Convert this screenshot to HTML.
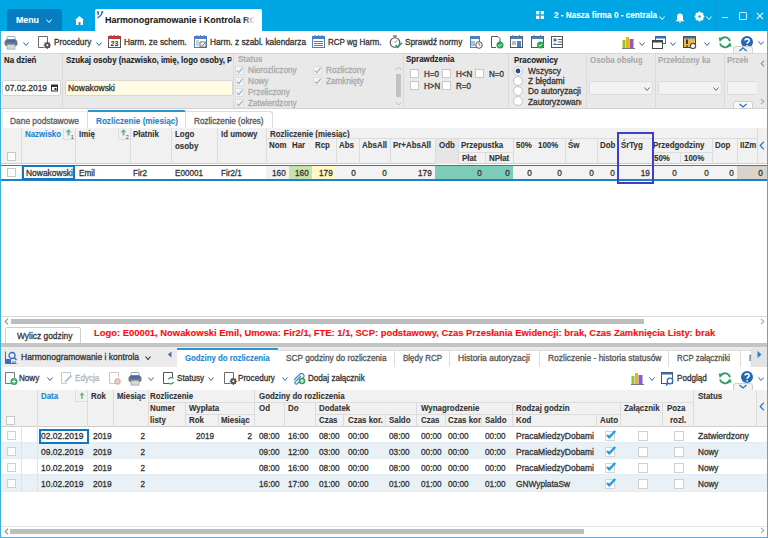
<!DOCTYPE html>
<html><head><meta charset="utf-8"><style>
html,body{margin:0;padding:0;width:768px;height:538px;overflow:hidden;background:#fff;}
body{position:relative;font-family:"Liberation Sans", sans-serif;}
body>div,body>span,body>svg{position:absolute;}
.t{white-space:nowrap;-webkit-text-stroke:0.1px currentColor;}
.t.n{-webkit-text-stroke:0.3px currentColor;}
</style></head><body>
<div style="left:0px;top:0px;width:768px;height:31px;background:#00a5e3;"></div>
<div style="left:7px;top:9px;width:55px;height:22px;background:#087cc0;border-radius:2px 2px 0 0;"></div>
<span class="t" style="top:14.03px;font-size:9px;line-height:12px;color:#fff;font-weight:bold;left:16px;transform:scaleX(0.979);transform-origin:0 0;">Menu</span>
<svg style="left:46px;top:19px;" width="6" height="4" viewBox="0 0 6 4"><path d="M0.5 0.5 L3.0 3.5 L5.5 0.5" fill="none" stroke="#fff" stroke-width="1"/></svg>
<svg style="left:75px;top:16px;" width="9" height="9" viewBox="0 0 9 9"><path d="M4.5 0 L9 4 L8 4 L8 9 L5.5 9 L5.5 6 L3.5 6 L3.5 9 L1 9 L1 4 L0 4 Z" fill="#fff"/></svg>
<div style="left:95px;top:9px;width:167px;height:22px;background:#fff;border-radius:2px 2px 0 0;"></div>
<svg style="left:96px;top:10px;" width="9" height="9" viewBox="0 0 9 9"><path d="M2 2.2 L2.2 4.5 M6.3 2 Q5.8 5.2 2 7.6" fill="none" stroke="#2a6cbf" stroke-width="1.4" stroke-linecap="round"/><circle cx="2" cy="2.3" r="1" fill="#2a6cbf"/><circle cx="6.3" cy="2.1" r="1" fill="#2a6cbf"/></svg>
<span class="t" style="top:13.63px;font-size:9.6px;line-height:12px;color:#1b1b1b;font-weight:bold;left:105px;width:163.1px;overflow:hidden;transform:scaleX(0.932);transform-origin:0 0;">Harmonogramowanie i Kontrola RCP</span>
<div style="left:243px;top:10px;width:19px;height:18px;background:linear-gradient(90deg, rgba(255,255,255,0), rgba(255,255,255,0.85) 50%, #fff 75%);"></div>
<svg style="left:536px;top:11px;" width="8" height="8" viewBox="0 0 8 8"><rect x="0" y="0" width="3.3" height="3.3" fill="#fff"/><rect x="4.7" y="0" width="3.3" height="3.3" fill="#fff"/><rect x="0" y="4.7" width="3.3" height="3.3" fill="#fff"/><rect x="4.7" y="4.7" width="3.3" height="3.3" fill="#fff"/></svg>
<span class="t" style="top:9.39px;font-size:8.8px;line-height:12px;color:#fff;font-weight:bold;left:554px;transform:scaleX(0.928);transform-origin:0 0;">2 - Nasza firma 0 - centrala</span>
<svg style="left:659px;top:15.5px;" width="6" height="4" viewBox="0 0 6 4"><path d="M0.5 0.5 L3.0 3.5 L5.5 0.5" fill="none" stroke="#fff" stroke-width="1"/></svg>
<svg style="left:675px;top:13px;" width="10" height="10" viewBox="0 0 10 10"><path d="M5 0.5 C2.5 0.5 2 2.5 2 4.5 L2 6.8 L0.5 8.3 L9.5 8.3 L8 6.8 L8 4.5 C8 2.5 7.5 0.5 5 0.5 Z M3.8 8.8 L6.2 8.8 L5 10 Z" fill="#fff"/></svg>
<svg style="left:694px;top:11px;" width="11" height="11" viewBox="0 0 11 11"><circle cx="5.5" cy="5.5" r="3.2" fill="none" stroke="#fff" stroke-width="2.2"/><path d="M5.5 0.6 L5.5 10.4 M0.6 5.5 L10.4 5.5 M2 2 L9 9 M9 2 L2 9" stroke="#fff" stroke-width="1.7"/><circle cx="5.5" cy="5.5" r="1.2" fill="#00a5e3"/></svg>
<svg style="left:706px;top:15.5px;" width="6" height="4" viewBox="0 0 6 4"><path d="M0.5 0.5 L3.0 3.5 L5.5 0.5" fill="none" stroke="#fff" stroke-width="1"/></svg>
<div style="left:716px;top:0px;width:1px;height:31px;background:#0a9ad2;"></div>
<div style="left:722px;top:17px;width:6px;height:1px;background:#bfe6f7;"></div>
<div style="left:739px;top:12px;width:6px;height:6px;background:transparent;border:1px solid #d0eefa;border-radius:1px;"></div>
<svg style="left:756px;top:12px;" width="8" height="8" viewBox="0 0 8 8"><path d="M0.8 0.8 L7 7 M7 0.8 L0.8 7" stroke="#dff4fc" stroke-width="1.1"/></svg>
<div style="left:0px;top:31px;width:1px;height:507px;background:#40b0de;"></div>
<div style="left:767px;top:31px;width:1px;height:507px;background:#40b0de;"></div>
<div style="left:0px;top:537px;width:768px;height:1px;background:#40b0de;"></div>
<svg style="left:4px;top:36px;" width="14" height="14" viewBox="0 0 14 14"><rect x="3" y="0.5" width="8" height="5" rx="1" fill="#fff" stroke="#8a9099" stroke-width="0.8"/><rect x="0.5" y="4" width="13" height="6" rx="2" fill="#6f757c"/><rect x="2.5" y="3.2" width="9" height="2.6" fill="#2f6cc0"/><rect x="3" y="8.3" width="8" height="4.8" fill="#cfd8e3" stroke="#8a9099" stroke-width="0.6"/></svg>
<svg style="left:23px;top:42px;" width="6" height="4" viewBox="0 0 6 4"><path d="M0.5 0.5 L3.0 3.5 L5.5 0.5" fill="none" stroke="#2a64a8" stroke-width="1"/></svg>
<svg style="left:38px;top:36px;" width="14" height="14" viewBox="0 0 14 14"><path d="M6 11.5 H0.5 V0.5 H9.5 V6" fill="none" stroke="#6b6b6b" stroke-width="1"/><circle cx="9.3" cy="9.3" r="2.1" fill="none" stroke="#555" stroke-width="1.7"/><path d="M9.3 5.6 V13 M5.6 9.3 H13 M6.7 6.7 L11.9 11.9 M11.9 6.7 L6.7 11.9" stroke="#555" stroke-width="1.1"/><circle cx="9.3" cy="9.3" r="1" fill="#fff"/></svg>
<span class="t n" style="top:36.06px;font-size:8.9px;line-height:12px;color:#333;left:53.5px;transform:scaleX(0.920);transform-origin:0 0;">Procedury</span>
<svg style="left:96px;top:42px;" width="6" height="4" viewBox="0 0 6 4"><path d="M0.5 0.5 L3.0 3.5 L5.5 0.5" fill="none" stroke="#2a64a8" stroke-width="1"/></svg>
<svg style="left:108px;top:35px;" width="13" height="13" viewBox="0 0 13 13"><rect x="0.5" y="1.5" width="12" height="11" fill="#fff" stroke="#555" stroke-width="1"/><rect x="0.5" y="1.5" width="12" height="2.5" fill="#d9322c"/><path d="M3 0 L3 2.5 M6.5 0 L6.5 2.5 M10 0 L10 2.5" stroke="#d9322c" stroke-width="1"/><text x="6.5" y="11.3" font-size="7" font-family="Liberation Sans" font-weight="bold" text-anchor="middle" fill="#333">23</text></svg>
<span class="t n" style="top:36.06px;font-size:8.9px;line-height:12px;color:#333;left:123.5px;transform:scaleX(0.933);transform-origin:0 0;">Harm. ze schem.</span>
<svg style="left:194px;top:35px;" width="13" height="13" viewBox="0 0 13 13"><rect x="0.5" y="1.5" width="12" height="11" fill="#fff" stroke="#4a7fc1" stroke-width="1"/><rect x="0.5" y="1.5" width="12" height="2.5" fill="#4a7fc1"/><path d="M3 0 L3 2.5 M6.5 0 L6.5 2.5 M10 0 L10 2.5" stroke="#4a7fc1"/><rect x="6" y="7" width="6" height="5" fill="#fff" stroke="#555" stroke-width="0.8"/><path d="M7 9.5 L8.5 11 L11 8" fill="none" stroke="#3a9a55" stroke-width="1"/><path d="M2 6 H5 M2 8 H5 M2 10 H5" stroke="#888" stroke-width="0.8"/></svg>
<span class="t n" style="top:36.06px;font-size:8.9px;line-height:12px;color:#333;left:209.5px;width:104.7px;overflow:hidden;transform:scaleX(0.936);transform-origin:0 0;">Harm. z szabl. kalendarza</span>
<svg style="left:312px;top:35px;" width="13" height="13" viewBox="0 0 13 13"><rect x="0.5" y="1.5" width="12" height="11" fill="#fff" stroke="#4a7fc1" stroke-width="1"/><rect x="0.5" y="1.5" width="12" height="2.5" fill="#4a7fc1"/><path d="M3 0 L3 2.5 M6.5 0 L6.5 2.5 M10 0 L10 2.5" stroke="#4a7fc1"/><path d="M2 6.5 H11 M2 8.5 H11 M2 10.5 H11" stroke="#4a7fc1" stroke-width="1"/></svg>
<span class="t n" style="top:36.06px;font-size:8.9px;line-height:12px;color:#333;left:328px;transform:scaleX(0.905);transform-origin:0 0;">RCP wg Harm.</span>
<svg style="left:389px;top:35px;" width="14" height="14" viewBox="0 0 14 14"><circle cx="6" cy="7.5" r="4.8" fill="none" stroke="#555" stroke-width="1.1"/><path d="M4 1 H8 M6 1 V2.7 M6 7.5 L8 5.5" stroke="#555" stroke-width="1"/><path d="M6.5 10 L8.7 12.3 L13 7.8" fill="none" stroke="#2ea05a" stroke-width="1.6"/></svg>
<span class="t n" style="top:36.06px;font-size:8.9px;line-height:12px;color:#333;left:405px;transform:scaleX(0.929);transform-origin:0 0;">Sprawdź normy</span>
<svg style="left:470px;top:35px;" width="13" height="14" viewBox="0 0 13 14"><rect x="0.5" y="1.5" width="9" height="11" fill="#fff" stroke="#4a7fc1"/><rect x="0.5" y="1.5" width="9" height="2.5" fill="#4a7fc1"/><path d="M2 6 V11 M4 6 V11" stroke="#4a7fc1"/><circle cx="9" cy="10" r="3.3" fill="#fff" stroke="#555"/><path d="M9 8 V10 H10.5" fill="none" stroke="#555" stroke-width="0.8"/></svg>
<svg style="left:491px;top:35px;" width="13" height="14" viewBox="0 0 13 14"><path d="M0.5 1.5 H7 L9 3.5 V7 M5 12.5 H0.5 V1.5" fill="none" stroke="#555"/><circle cx="9" cy="10" r="3.5" fill="#2ea05a"/><path d="M7.2 10 L8.5 11.3 L10.8 8.8" fill="none" stroke="#fff" stroke-width="1"/></svg>
<svg style="left:510px;top:35px;" width="14" height="14" viewBox="0 0 14 14"><rect x="0.5" y="1.5" width="12" height="11" fill="#fff" stroke="#555"/><rect x="0.5" y="1.5" width="12" height="2.5" fill="#4a7fc1"/><path d="M3 0 V2.5 M9.5 0 V2.5" stroke="#4a7fc1"/><rect x="7" y="6" width="4" height="6" fill="#4a7fc1"/><path d="M2 7 H6 M2 9 H6" stroke="#555" stroke-width="0.8"/></svg>
<svg style="left:531px;top:35px;" width="14" height="14" viewBox="0 0 14 14"><rect x="0.5" y="1.5" width="12" height="11" fill="#fff" stroke="#555"/><rect x="0.5" y="1.5" width="12" height="2.5" fill="#4a7fc1"/><path d="M3 0 V2.5 M9.5 0 V2.5" stroke="#4a7fc1"/><circle cx="9.5" cy="10" r="3.5" fill="#2ea05a"/><path d="M7.8 10 L9 11.2 L11.2 8.8" fill="none" stroke="#fff" stroke-width="1"/></svg>
<svg style="left:551px;top:35px;" width="13" height="14" viewBox="0 0 13 14"><rect x="0.5" y="1.5" width="11" height="11" fill="#fff" stroke="#555"/><circle cx="4" cy="5" r="1.8" fill="#4a7fc1"/><path d="M1.5 10 Q4 6.5 6.5 10 Z" fill="#4a7fc1"/><path d="M7 4.5 H11 M7 7 H11 M6 9.5 H11" stroke="#555" stroke-width="0.9"/></svg>
<svg style="left:622px;top:36px;" width="13" height="13" viewBox="0 0 13 13"><rect x="0.5" y="4" width="3" height="8.5" fill="#8bc34a"/><rect x="4" y="1" width="3" height="11.5" fill="#f5b400"/><rect x="7.5" y="3" width="4" height="9.5" fill="#8e5bd0"/><path d="M0 12.5 H13" stroke="#777"/></svg>
<svg style="left:639px;top:42px;" width="6" height="4" viewBox="0 0 6 4"><path d="M0.5 0.5 L3.0 3.5 L5.5 0.5" fill="none" stroke="#2a64a8" stroke-width="1"/></svg>
<svg style="left:652px;top:36px;" width="14" height="13" viewBox="0 0 14 13"><rect x="3.5" y="0.5" width="10" height="7" fill="#fff" stroke="#2f6fbf"/><rect x="3.5" y="0.5" width="10" height="2" fill="#2f6fbf"/><rect x="0.5" y="4.5" width="10" height="8" fill="#fff" stroke="#444"/><rect x="0.5" y="4.5" width="10" height="2" fill="#444"/></svg>
<svg style="left:670px;top:42px;" width="6" height="4" viewBox="0 0 6 4"><path d="M0.5 0.5 L3.0 3.5 L5.5 0.5" fill="none" stroke="#2a64a8" stroke-width="1"/></svg>
<svg style="left:683px;top:36px;" width="14" height="13" viewBox="0 0 14 13"><rect x="0.5" y="0.5" width="12" height="11" fill="#e8b84a" stroke="#444"/><rect x="0.5" y="0.5" width="12" height="2" fill="#2f6fbf"/><path d="M4 3.5 V8 M4 9.5 V10.8" stroke="#222" stroke-width="1.6"/><circle cx="10" cy="10" r="2.6" fill="#fff" stroke="#555" stroke-width="1.3"/></svg>
<svg style="left:704px;top:42px;" width="6" height="4" viewBox="0 0 6 4"><path d="M0.5 0.5 L3.0 3.5 L5.5 0.5" fill="none" stroke="#2a64a8" stroke-width="1"/></svg>
<svg style="left:718px;top:35px;" width="14" height="14" viewBox="0 0 14 14"><path d="M12 6.2 A5.2 5.2 0 0 0 2.6 4.6 M2 8.4 A5.2 5.2 0 0 0 11.6 9.6" fill="none" stroke="#2f9f63" stroke-width="1.8"/><path d="M0.6 2.6 L5.4 3.2 L1.8 7 Z M13.4 11.8 L8.6 11 L12.4 7.4 Z" fill="#2f9f63"/></svg>
<svg style="left:741px;top:36px;" width="12" height="12" viewBox="0 0 12 12"><circle cx="6" cy="6" r="6" fill="#2367b9"/><path d="M4 4.6 C4 2.3 8.2 2.3 8.2 4.6 C8.2 6.2 6.1 6.2 6.1 7.8" fill="none" stroke="#fff" stroke-width="1.6"/><circle cx="6.1" cy="9.8" r="0.9" fill="#fff"/></svg>
<svg style="left:758px;top:41px;" width="6" height="4" viewBox="0 0 6 4"><path d="M0.5 0.5 L3.0 3.5 L5.5 0.5" fill="none" stroke="#2a64a8" stroke-width="1"/></svg>
<div style="left:733px;top:46px;width:20px;height:7px;background:#f4f4f4;border:1px solid #d0d0d0;border-bottom:none;border-radius:3px 3px 0 0;box-sizing:border-box;"></div>
<svg style="left:739px;top:47px;" width="8" height="5" viewBox="0 0 8 5"><path d="M0.5 4 L4 0.8 L7.5 4" fill="none" stroke="#1f6fc0" stroke-width="1.2"/></svg>
<div style="left:1px;top:53px;width:766px;height:55px;background:#e9e9e9;"></div>
<div style="left:1px;top:53px;width:766px;height:1px;background:#d8d8d8;"></div>
<div style="left:1px;top:108px;width:766px;height:1px;background:#d2d2d2;"></div>
<div style="left:62px;top:54px;width:1px;height:54px;background:#dadada;"></div>
<div style="left:233px;top:54px;width:1px;height:54px;background:#dadada;"></div>
<div style="left:403px;top:54px;width:1px;height:54px;background:#dadada;"></div>
<div style="left:508px;top:54px;width:1px;height:54px;background:#dadada;"></div>
<div style="left:586px;top:54px;width:1px;height:54px;background:#dadada;"></div>
<div style="left:655px;top:54px;width:1px;height:54px;background:#dadada;"></div>
<div style="left:724px;top:54px;width:1px;height:54px;background:#dadada;"></div>
<span class="t" style="top:54.46px;font-size:8.6px;line-height:12px;color:#222;font-weight:bold;left:4px;transform:scaleX(0.917);transform-origin:0 0;">Na dzień</span>
<span class="t" style="top:54.46px;font-size:8.6px;line-height:12px;color:#222;font-weight:bold;left:66px;width:180.4px;overflow:hidden;transform:scaleX(0.920);transform-origin:0 0;">Szukaj osoby (nazwisko, imię, logo osoby, PESEL)</span>
<div style="left:2px;top:80px;width:59px;height:16px;background:#fff;border:1px solid #d6d6d6;border-radius:2px;box-sizing:border-box;"></div>
<span class="t n" style="top:82.09px;font-size:8.8px;line-height:12px;color:#333;left:5px;transform:scaleX(0.954);transform-origin:0 0;">07.02.2019</span>
<svg style="left:51px;top:84px;" width="7" height="8" viewBox="0 0 7 8"><rect x="0.5" y="1" width="6" height="6" fill="none" stroke="#333" stroke-width="1"/><rect x="0.5" y="1" width="6" height="2" fill="#333"/><rect x="3.5" y="4" width="2" height="2" fill="#333"/></svg>
<div style="left:65px;top:80px;width:168px;height:16px;background:#fffbe3;border:1px solid #d6d6d6;border-radius:2px;box-sizing:border-box;"></div>
<span class="t n" style="top:82.09px;font-size:8.8px;line-height:12px;color:#333;left:68px;transform:scaleX(0.961);transform-origin:0 0;">Nowakowski</span>
<span class="t" style="top:53.46px;font-size:8.6px;line-height:12px;color:#a9a9a9;font-weight:bold;left:238px;transform:scaleX(0.933);transform-origin:0 0;">Status</span>
<div style="left:235px;top:66px;width:7px;height:7px;background:#f3f3f3;border:1px solid #dedede;"></div>
<svg style="left:235px;top:66px;" width="9" height="9" viewBox="0 0 9 9"><path d="M1.8 4.6 L3.8 6.6 L7.6 1.8" fill="none" stroke="#8fb2d2" stroke-width="1.1"/></svg>
<span class="t n" style="top:64.36px;font-size:8.6px;line-height:12px;color:#a9a9a9;left:248px;transform:scaleX(0.950);transform-origin:0 0;">Nierozliczony</span>
<div style="left:235px;top:77px;width:7px;height:7px;background:#f3f3f3;border:1px solid #dedede;"></div>
<svg style="left:235px;top:77px;" width="9" height="9" viewBox="0 0 9 9"><path d="M1.8 4.6 L3.8 6.6 L7.6 1.8" fill="none" stroke="#8fb2d2" stroke-width="1.1"/></svg>
<span class="t n" style="top:75.36px;font-size:8.6px;line-height:12px;color:#a9a9a9;left:248px;transform:scaleX(0.950);transform-origin:0 0;">Nowy</span>
<div style="left:235px;top:88px;width:7px;height:7px;background:#f3f3f3;border:1px solid #dedede;"></div>
<svg style="left:235px;top:88px;" width="9" height="9" viewBox="0 0 9 9"><path d="M1.8 4.6 L3.8 6.6 L7.6 1.8" fill="none" stroke="#8fb2d2" stroke-width="1.1"/></svg>
<span class="t n" style="top:86.36px;font-size:8.6px;line-height:12px;color:#a9a9a9;left:248px;transform:scaleX(0.950);transform-origin:0 0;">Przeliczony</span>
<div style="left:235px;top:99px;width:7px;height:7px;background:#f3f3f3;border:1px solid #dedede;"></div>
<svg style="left:235px;top:99px;" width="9" height="9" viewBox="0 0 9 9"><path d="M1.8 4.6 L3.8 6.6 L7.6 1.8" fill="none" stroke="#8fb2d2" stroke-width="1.1"/></svg>
<span class="t n" style="top:97.36px;font-size:8.6px;line-height:12px;color:#a9a9a9;left:248px;transform:scaleX(0.950);transform-origin:0 0;">Zatwierdzony</span>
<div style="left:313px;top:66px;width:7px;height:7px;background:#f3f3f3;border:1px solid #dedede;"></div>
<svg style="left:313px;top:66px;" width="9" height="9" viewBox="0 0 9 9"><path d="M1.8 4.6 L3.8 6.6 L7.6 1.8" fill="none" stroke="#8fb2d2" stroke-width="1.1"/></svg>
<span class="t n" style="top:64.36px;font-size:8.6px;line-height:12px;color:#a9a9a9;left:326px;transform:scaleX(0.950);transform-origin:0 0;">Rozliczony</span>
<div style="left:313px;top:77px;width:7px;height:7px;background:#f3f3f3;border:1px solid #dedede;"></div>
<svg style="left:313px;top:77px;" width="9" height="9" viewBox="0 0 9 9"><path d="M1.8 4.6 L3.8 6.6 L7.6 1.8" fill="none" stroke="#8fb2d2" stroke-width="1.1"/></svg>
<span class="t n" style="top:75.36px;font-size:8.6px;line-height:12px;color:#a9a9a9;left:326px;transform:scaleX(0.950);transform-origin:0 0;">Zamknięty</span>
<svg style="left:395px;top:66px;" width="7" height="5" viewBox="0 0 7 5"><path d="M0.5 4 L3.5 1 L6.5 4" fill="none" stroke="#bbb"/></svg>
<div style="left:396px;top:74px;width:5px;height:23px;background:#c2c2c2;"></div>
<svg style="left:395px;top:101px;" width="7" height="5" viewBox="0 0 7 5"><path d="M0.5 1 L3.5 4 L6.5 1" fill="none" stroke="#bbb"/></svg>
<span class="t" style="top:53.46px;font-size:8.6px;line-height:12px;color:#222;font-weight:bold;left:406px;transform:scaleX(0.920);transform-origin:0 0;">Sprawdzenia</span>
<div style="left:410px;top:69px;width:7px;height:7px;background:#fff;border:1px solid #c7c7c7;"></div>
<span class="t n" style="top:67.76px;font-size:8.6px;line-height:12px;color:#333;left:423.5px;transform:scaleX(0.930);transform-origin:0 0;">H=0</span>
<div style="left:442px;top:69px;width:7px;height:7px;background:#fff;border:1px solid #c7c7c7;"></div>
<span class="t n" style="top:67.76px;font-size:8.6px;line-height:12px;color:#333;left:455.5px;transform:scaleX(0.930);transform-origin:0 0;">H&lt;N</span>
<div style="left:475px;top:69px;width:7px;height:7px;background:#fff;border:1px solid #c7c7c7;"></div>
<span class="t n" style="top:67.76px;font-size:8.6px;line-height:12px;color:#333;left:488.5px;transform:scaleX(0.930);transform-origin:0 0;">N=0</span>
<div style="left:410px;top:81px;width:7px;height:7px;background:#fff;border:1px solid #c7c7c7;"></div>
<span class="t n" style="top:79.66px;font-size:8.6px;line-height:12px;color:#333;left:423.5px;transform:scaleX(0.930);transform-origin:0 0;">H&gt;N</span>
<div style="left:442px;top:81px;width:7px;height:7px;background:#fff;border:1px solid #c7c7c7;"></div>
<span class="t n" style="top:79.66px;font-size:8.6px;line-height:12px;color:#333;left:455.5px;transform:scaleX(0.930);transform-origin:0 0;">R=0</span>
<span class="t" style="top:54.46px;font-size:8.6px;line-height:12px;color:#222;font-weight:bold;left:514px;transform:scaleX(0.920);transform-origin:0 0;">Pracownicy</span>
<svg style="left:513px;top:65.5px;" width="10" height="10" viewBox="0 0 10 10"><circle cx="5" cy="5" r="4.4" fill="#fff" stroke="#c4c4c4"/><circle cx="5" cy="5" r="2.4" fill="#1f4f8f"/></svg>
<span class="t n" style="top:64.76px;font-size:8.6px;line-height:12px;color:#333;left:527.5px;width:54.6px;overflow:hidden;transform:scaleX(0.970);transform-origin:0 0;">Wszyscy</span>
<svg style="left:513px;top:75.8px;" width="10" height="10" viewBox="0 0 10 10"><circle cx="5" cy="5" r="4.4" fill="#fff" stroke="#c4c4c4"/></svg>
<span class="t n" style="top:75.06px;font-size:8.6px;line-height:12px;color:#333;left:527.5px;width:54.6px;overflow:hidden;transform:scaleX(0.970);transform-origin:0 0;">Z błędami</span>
<svg style="left:513px;top:86.1px;" width="10" height="10" viewBox="0 0 10 10"><circle cx="5" cy="5" r="4.4" fill="#fff" stroke="#c4c4c4"/></svg>
<span class="t n" style="top:85.36px;font-size:8.6px;line-height:12px;color:#333;left:527.5px;width:54.6px;overflow:hidden;transform:scaleX(0.970);transform-origin:0 0;">Do autoryzacji</span>
<svg style="left:513px;top:96.4px;" width="10" height="10" viewBox="0 0 10 10"><circle cx="5" cy="5" r="4.4" fill="#fff" stroke="#c4c4c4"/></svg>
<span class="t n" style="top:95.66px;font-size:8.6px;line-height:12px;color:#333;left:527.5px;width:54.6px;overflow:hidden;transform:scaleX(0.970);transform-origin:0 0;">Zautoryzowane</span>
<span class="t" style="top:53.96px;font-size:8.6px;line-height:12px;color:#a9a9a9;font-weight:bold;left:590px;width:56.5px;overflow:hidden;transform:scaleX(0.920);transform-origin:0 0;">Osoba obsługująca</span>
<span class="t" style="top:53.96px;font-size:8.6px;line-height:12px;color:#a9a9a9;font-weight:bold;left:658px;width:56.5px;overflow:hidden;transform:scaleX(0.920);transform-origin:0 0;">Przełożony kadrowy</span>
<span class="t" style="top:53.96px;font-size:8.6px;line-height:12px;color:#a9a9a9;font-weight:bold;left:727px;width:22.8px;overflow:hidden;transform:scaleX(0.920);transform-origin:0 0;">Przełożony</span>
<div style="left:589px;top:81px;width:64px;height:14px;background:#f2f2f2;border:1px solid #dcdcdc;border-radius:2px;box-sizing:border-box;"></div>
<svg style="left:644px;top:87px;" width="6" height="4" viewBox="0 0 6 4"><path d="M0.5 0.5 L3.0 3.5 L5.5 0.5" fill="none" stroke="#666" stroke-width="1"/></svg>
<div style="left:658px;top:81px;width:64px;height:14px;background:#f2f2f2;border:1px solid #dcdcdc;border-radius:2px;box-sizing:border-box;"></div>
<svg style="left:713px;top:87px;" width="6" height="4" viewBox="0 0 6 4"><path d="M0.5 0.5 L3.0 3.5 L5.5 0.5" fill="none" stroke="#666" stroke-width="1"/></svg>
<div style="left:727px;top:81px;width:30px;height:14px;background:#f2f2f2;border:1px solid #dcdcdc;border-right:none;border-radius:2px 0 0 2px;box-sizing:border-box;"></div>
<svg style="left:760px;top:60px;" width="5" height="7" viewBox="0 0 5 7"><path d="M4 0.8 L1.2 3.5 L4 6.2" fill="none" stroke="#999" stroke-width="1.2"/></svg>
<svg style="left:760px;top:98px;" width="5" height="7" viewBox="0 0 5 7"><path d="M1 0.8 L3.8 3.5 L1 6.2" fill="none" stroke="#aaa" stroke-width="1.1"/></svg>
<div style="left:733px;top:101px;width:20px;height:8px;background:#f8f8f8;border:1px solid #cfcfcf;border-radius:3px 3px 0 0;box-sizing:border-box;"></div>
<svg style="left:739px;top:103px;" width="8" height="5" viewBox="0 0 8 5"><path d="M0.5 1 L4 4 L7.5 1" fill="none" stroke="#1f6fc0" stroke-width="1.2"/></svg>
<div style="left:1px;top:109px;width:766px;height:19px;background:#fff;"></div>
<div style="left:2px;top:111px;width:86px;height:17px;background:#fff;border:1px solid #ececec;border-bottom:none;border-radius:3px 3px 0 0;box-sizing:border-box;"></div>
<span class="t n" style="top:114.59px;font-size:8.8px;line-height:12px;color:#606060;left:10px;transform:scaleX(0.953);transform-origin:0 0;">Dane podstawowe</span>
<div style="left:87px;top:110px;width:99px;height:18px;background:#fff;border:1px solid #dcdcdc;border-top:2px solid #2b93d6;border-bottom:none;border-radius:2px 2px 0 0;box-sizing:border-box;"></div>
<span class="t" style="top:114.62px;font-size:8.7px;line-height:12px;color:#1e86cc;font-weight:bold;left:95.7px;transform:scaleX(0.938);transform-origin:0 0;">Rozliczenie (miesiąc)</span>
<div style="left:186px;top:111px;width:87px;height:17px;background:#fff;border:1px solid #dcdcdc;border-left:none;border-bottom:none;border-radius:0 3px 0 0;box-sizing:border-box;"></div>
<span class="t n" style="top:114.59px;font-size:8.8px;line-height:12px;color:#555;left:194px;transform:scaleX(0.930);transform-origin:0 0;">Rozliczenie (okres)</span>
<div style="left:1px;top:128px;width:766px;height:36px;background:#f1f1f1;"></div>
<div style="left:1px;top:163px;width:766px;height:1px;background:#cfcfcf;"></div>
<div style="left:21px;top:128px;width:1px;height:36px;background:#dcdcdc;"></div>
<div style="left:75px;top:128px;width:1px;height:36px;background:#dcdcdc;"></div>
<div style="left:130px;top:128px;width:1px;height:36px;background:#dcdcdc;"></div>
<div style="left:171px;top:128px;width:1px;height:36px;background:#dcdcdc;"></div>
<div style="left:217px;top:128px;width:1px;height:36px;background:#dcdcdc;"></div>
<div style="left:266px;top:128px;width:1px;height:36px;background:#dcdcdc;"></div>
<div style="left:757px;top:128px;width:1px;height:36px;background:#dcdcdc;"></div>
<span class="t" style="top:128.46px;font-size:8.6px;line-height:12px;color:#1e86cc;font-weight:bold;left:25px;transform:scaleX(0.920);transform-origin:0 0;">Nazwisko</span>
<div style="left:63px;top:128px;width:12px;height:12px;background:transparent;border-left:1px solid #dedede;border-bottom:1px solid #dedede;box-sizing:border-box;"></div>
<svg style="left:64px;top:128px;" width="11" height="12" viewBox="0 0 11 12"><path d="M4.5 7.5 V3" stroke="#62b98b" stroke-width="1.8"/><path d="M1.6 4.2 L4.5 1 L7.4 4.2 Z" fill="#62b98b"/><text x="6.8" y="10.6" font-size="5.5" font-family="Liberation Sans" fill="#444">1</text></svg>
<span class="t" style="top:128.46px;font-size:8.6px;line-height:12px;color:#333;font-weight:bold;left:79px;transform:scaleX(0.920);transform-origin:0 0;">Imię</span>
<div style="left:118px;top:128px;width:12px;height:12px;background:transparent;border-left:1px solid #dedede;border-bottom:1px solid #dedede;box-sizing:border-box;"></div>
<svg style="left:119px;top:128px;" width="11" height="12" viewBox="0 0 11 12"><path d="M4.5 7.5 V3" stroke="#62b98b" stroke-width="1.8"/><path d="M1.6 4.2 L4.5 1 L7.4 4.2 Z" fill="#62b98b"/><text x="6.8" y="10.6" font-size="5.5" font-family="Liberation Sans" fill="#444">2</text></svg>
<span class="t" style="top:128.46px;font-size:8.6px;line-height:12px;color:#333;font-weight:bold;left:133px;transform:scaleX(0.920);transform-origin:0 0;">Płatnik</span>
<span class="t" style="top:128.46px;font-size:8.6px;line-height:12px;color:#333;font-weight:bold;left:175px;transform:scaleX(0.920);transform-origin:0 0;">Logo</span>
<span class="t" style="top:140.46px;font-size:8.6px;line-height:12px;color:#333;font-weight:bold;left:175px;transform:scaleX(0.920);transform-origin:0 0;">osoby</span>
<span class="t" style="top:128.46px;font-size:8.6px;line-height:12px;color:#333;font-weight:bold;left:221px;transform:scaleX(0.920);transform-origin:0 0;">Id umowy</span>
<div style="left:7px;top:152px;width:7px;height:7px;background:#fff;border:1px solid #c8c8c8;"></div>
<span class="t" style="top:128.46px;font-size:8.6px;line-height:12px;color:#333;font-weight:bold;left:270px;transform:scaleX(0.920);transform-origin:0 0;">Rozliczenie (miesiąc)</span>
<div style="left:267px;top:138px;width:490px;height:1px;background:#dcdcdc;"></div>
<span class="t" style="top:139.46px;font-size:8.6px;line-height:12px;color:#333;font-weight:bold;left:269px;transform:scaleX(0.920);transform-origin:0 0;">Nom</span>
<span class="t" style="top:139.46px;font-size:8.6px;line-height:12px;color:#333;font-weight:bold;left:292px;transform:scaleX(0.920);transform-origin:0 0;">Har</span>
<span class="t" style="top:139.46px;font-size:8.6px;line-height:12px;color:#333;font-weight:bold;left:314.5px;transform:scaleX(0.920);transform-origin:0 0;">Rcp</span>
<span class="t" style="top:139.46px;font-size:8.6px;line-height:12px;color:#333;font-weight:bold;left:339px;transform:scaleX(0.920);transform-origin:0 0;">Abs</span>
<span class="t" style="top:139.46px;font-size:8.6px;line-height:12px;color:#333;font-weight:bold;left:362px;transform:scaleX(0.920);transform-origin:0 0;">AbsAll</span>
<span class="t" style="top:139.46px;font-size:8.6px;line-height:12px;color:#333;font-weight:bold;left:393px;transform:scaleX(0.920);transform-origin:0 0;">Pr+AbsAll</span>
<span class="t" style="top:139.46px;font-size:8.6px;line-height:12px;color:#333;font-weight:bold;left:438px;transform:scaleX(0.920);transform-origin:0 0;">Odb</span>
<span class="t" style="top:139.46px;font-size:8.6px;line-height:12px;color:#333;font-weight:bold;left:461px;transform:scaleX(0.920);transform-origin:0 0;">Przepustka</span>
<span class="t" style="top:139.46px;font-size:8.6px;line-height:12px;color:#333;font-weight:bold;left:516px;transform:scaleX(0.920);transform-origin:0 0;">50%</span>
<span class="t" style="top:139.46px;font-size:8.6px;line-height:12px;color:#333;font-weight:bold;left:538px;transform:scaleX(0.920);transform-origin:0 0;">100%</span>
<span class="t" style="top:139.46px;font-size:8.6px;line-height:12px;color:#333;font-weight:bold;left:568px;transform:scaleX(0.920);transform-origin:0 0;">Św</span>
<span class="t" style="top:139.46px;font-size:8.6px;line-height:12px;color:#333;font-weight:bold;left:600px;transform:scaleX(0.920);transform-origin:0 0;">Dob</span>
<span class="t" style="top:139.46px;font-size:8.6px;line-height:12px;color:#333;font-weight:bold;left:621px;transform:scaleX(0.920);transform-origin:0 0;">ŚrTyg</span>
<span class="t" style="top:139.46px;font-size:8.6px;line-height:12px;color:#333;font-weight:bold;left:653px;transform:scaleX(0.920);transform-origin:0 0;">Przedgodziny</span>
<span class="t" style="top:139.46px;font-size:8.6px;line-height:12px;color:#333;font-weight:bold;left:715px;transform:scaleX(0.920);transform-origin:0 0;">Dop</span>
<span class="t" style="top:139.46px;font-size:8.6px;line-height:12px;color:#333;font-weight:bold;left:740px;width:20.7px;overflow:hidden;transform:scaleX(0.920);transform-origin:0 0;">IIZm</span>
<div style="left:336px;top:139px;width:1px;height:25px;background:#dcdcdc;"></div>
<div style="left:359px;top:139px;width:1px;height:25px;background:#dcdcdc;"></div>
<div style="left:390px;top:139px;width:1px;height:25px;background:#dcdcdc;"></div>
<div style="left:435px;top:139px;width:1px;height:25px;background:#dcdcdc;"></div>
<div style="left:458px;top:139px;width:1px;height:25px;background:#dcdcdc;"></div>
<div style="left:513px;top:139px;width:1px;height:25px;background:#dcdcdc;"></div>
<div style="left:565px;top:139px;width:1px;height:25px;background:#dcdcdc;"></div>
<div style="left:597px;top:139px;width:1px;height:25px;background:#dcdcdc;"></div>
<div style="left:618px;top:139px;width:1px;height:25px;background:#dcdcdc;"></div>
<div style="left:653px;top:139px;width:1px;height:25px;background:#dcdcdc;"></div>
<div style="left:712px;top:139px;width:1px;height:25px;background:#dcdcdc;"></div>
<div style="left:737px;top:139px;width:1px;height:25px;background:#dcdcdc;"></div>
<div style="left:436px;top:139px;width:22px;height:25px;background:#e6e6e6;"></div>
<span class="t" style="top:139.46px;font-size:8.6px;line-height:12px;color:#333;font-weight:bold;left:438.5px;transform:scaleX(0.920);transform-origin:0 0;">Odb</span>
<div style="left:459px;top:152px;width:54px;height:1px;background:#dcdcdc;"></div>
<div style="left:654px;top:152px;width:58px;height:1px;background:#dcdcdc;"></div>
<span class="t" style="top:152.46px;font-size:8.6px;line-height:12px;color:#333;font-weight:bold;left:462px;transform:scaleX(0.920);transform-origin:0 0;">Płat</span>
<div style="left:485px;top:153px;width:1px;height:11px;background:#dcdcdc;"></div>
<span class="t" style="top:152.46px;font-size:8.6px;line-height:12px;color:#333;font-weight:bold;left:489px;transform:scaleX(0.920);transform-origin:0 0;">NPłat</span>
<span class="t" style="top:152.46px;font-size:8.6px;line-height:12px;color:#333;font-weight:bold;left:654px;transform:scaleX(0.920);transform-origin:0 0;">50%</span>
<div style="left:680px;top:153px;width:1px;height:11px;background:#dcdcdc;"></div>
<span class="t" style="top:152.46px;font-size:8.6px;line-height:12px;color:#333;font-weight:bold;left:684px;transform:scaleX(0.920);transform-origin:0 0;">100%</span>
<svg style="left:759px;top:141px;" width="6" height="9" viewBox="0 0 6 9"><path d="M4.8 0.8 L1.2 4.5 L4.8 8.2" fill="none" stroke="#2a7fd0" stroke-width="1.3"/></svg>
<div style="left:1px;top:164px;width:766px;height:16px;background:#fff;"></div>
<div style="left:1px;top:164.7px;width:766px;height:1.2px;background:#1c82c8;"></div>
<div style="left:1px;top:179.1px;width:766px;height:1.6px;background:#1c82c8;"></div>
<div style="left:7px;top:168px;width:7px;height:7px;background:#fff;border:1px solid #c8c8c8;"></div>
<div style="left:21px;top:166px;width:1px;height:13px;background:#e3e3e3;"></div>
<div style="left:22px;top:165px;width:53px;height:15px;background:transparent;border:2px solid #0f78c0;box-sizing:border-box;"></div>
<span class="t n" style="top:166.59px;font-size:8.8px;line-height:12px;color:#333;left:26px;transform:scaleX(0.961);transform-origin:0 0;">Nowakowski</span>
<span class="t n" style="top:166.59px;font-size:8.8px;line-height:12px;color:#333;left:79px;transform:scaleX(0.920);transform-origin:0 0;">Emil</span>
<span class="t n" style="top:166.59px;font-size:8.8px;line-height:12px;color:#333;left:133px;transform:scaleX(0.920);transform-origin:0 0;">Fir2</span>
<span class="t n" style="top:166.59px;font-size:8.8px;line-height:12px;color:#333;left:175px;transform:scaleX(0.920);transform-origin:0 0;">E00001</span>
<span class="t n" style="top:166.59px;font-size:8.8px;line-height:12px;color:#333;left:221px;transform:scaleX(0.920);transform-origin:0 0;">Fir2/1</span>
<div style="left:266px;top:166px;width:23px;height:13px;background:#f2f2f2;"></div>
<span class="t n" style="top:166.59px;font-size:8.8px;line-height:12px;color:#333;right:482px;transform:scaleX(0.930);transform-origin:100% 0;">160</span>
<div style="left:289px;top:166px;width:23px;height:13px;background:#c6e2ad;"></div>
<span class="t n" style="top:166.59px;font-size:8.8px;line-height:12px;color:#333;right:459px;transform:scaleX(0.930);transform-origin:100% 0;">160</span>
<div style="left:312px;top:166px;width:23.5px;height:13px;background:#fff7c4;"></div>
<span class="t n" style="top:166.59px;font-size:8.8px;line-height:12px;color:#333;right:435.5px;transform:scaleX(0.930);transform-origin:100% 0;">179</span>
<div style="left:335.5px;top:166px;width:23.5px;height:13px;background:#f3f3f3;"></div>
<span class="t n" style="top:166.59px;font-size:8.8px;line-height:12px;color:#333;right:412px;transform:scaleX(0.930);transform-origin:100% 0;">0</span>
<div style="left:359px;top:166px;width:31px;height:13px;background:#f3f3f3;"></div>
<span class="t n" style="top:166.59px;font-size:8.8px;line-height:12px;color:#333;right:381px;transform:scaleX(0.930);transform-origin:100% 0;">0</span>
<div style="left:390px;top:166px;width:45px;height:13px;background:#f3f3f3;"></div>
<span class="t n" style="top:166.59px;font-size:8.8px;line-height:12px;color:#333;right:336px;transform:scaleX(0.930);transform-origin:100% 0;">179</span>
<div style="left:435px;top:166px;width:23px;height:13px;background:#7dcbb9;"></div>
<div style="left:458px;top:166px;width:27px;height:13px;background:#7dcbb9;"></div>
<span class="t n" style="top:166.59px;font-size:8.8px;line-height:12px;color:#333;right:286px;transform:scaleX(0.930);transform-origin:100% 0;">0</span>
<div style="left:485px;top:166px;width:28px;height:13px;background:#7dcbb9;"></div>
<span class="t n" style="top:166.59px;font-size:8.8px;line-height:12px;color:#333;right:258px;transform:scaleX(0.930);transform-origin:100% 0;">0</span>
<div style="left:513px;top:166px;width:22px;height:13px;background:#f3f3f3;"></div>
<span class="t n" style="top:166.59px;font-size:8.8px;line-height:12px;color:#333;right:236px;transform:scaleX(0.930);transform-origin:100% 0;">0</span>
<div style="left:535px;top:166px;width:30px;height:13px;background:#f3f3f3;"></div>
<span class="t n" style="top:166.59px;font-size:8.8px;line-height:12px;color:#333;right:206px;transform:scaleX(0.930);transform-origin:100% 0;">0</span>
<div style="left:565px;top:166px;width:32px;height:13px;background:#f3f3f3;"></div>
<span class="t n" style="top:166.59px;font-size:8.8px;line-height:12px;color:#333;right:174px;transform:scaleX(0.930);transform-origin:100% 0;">0</span>
<div style="left:597px;top:166px;width:21px;height:13px;background:#f3f3f3;"></div>
<span class="t n" style="top:166.59px;font-size:8.8px;line-height:12px;color:#333;right:153px;transform:scaleX(0.930);transform-origin:100% 0;">0</span>
<div style="left:618px;top:166px;width:35px;height:13px;background:#f3f3f3;"></div>
<span class="t n" style="top:166.59px;font-size:8.8px;line-height:12px;color:#333;right:118px;transform:scaleX(0.930);transform-origin:100% 0;">19</span>
<div style="left:653px;top:166px;width:27px;height:13px;background:#f3f3f3;"></div>
<span class="t n" style="top:166.59px;font-size:8.8px;line-height:12px;color:#333;right:91px;transform:scaleX(0.930);transform-origin:100% 0;">0</span>
<div style="left:680px;top:166px;width:32px;height:13px;background:#f3f3f3;"></div>
<span class="t n" style="top:166.59px;font-size:8.8px;line-height:12px;color:#333;right:59px;transform:scaleX(0.930);transform-origin:100% 0;">0</span>
<div style="left:712px;top:166px;width:25px;height:13px;background:#f3f3f3;"></div>
<span class="t n" style="top:166.59px;font-size:8.8px;line-height:12px;color:#333;right:34px;transform:scaleX(0.930);transform-origin:100% 0;">0</span>
<div style="left:737px;top:166px;width:30px;height:13px;background:#d8d3cb;"></div>
<span class="t n" style="top:166.59px;font-size:8.8px;line-height:12px;color:#333;right:5px;transform:scaleX(0.930);transform-origin:100% 0;">0</span>
<div style="left:617px;top:132px;width:37px;height:52px;background:transparent;border:2px solid #3b3fcf;box-sizing:border-box;"></div>
<div style="left:1px;top:316px;width:766px;height:1px;background:#d9d9d9;"></div>
<svg style="left:4px;top:318px;" width="5" height="7" viewBox="0 0 5 7"><path d="M4 0.8 L1.2 3.5 L4 6.2" fill="none" stroke="#999" stroke-width="1.2"/></svg>
<div style="left:11px;top:319px;width:633px;height:5px;background:#bdbdbd;"></div>
<svg style="left:760px;top:318px;" width="5" height="7" viewBox="0 0 5 7"><path d="M1 0.8 L3.8 3.5 L1 6.2" fill="none" stroke="#aaa" stroke-width="1.1"/></svg>
<div style="left:5px;top:327px;width:76px;height:17px;background:#fff;border:1px solid #cfcfcf;border-radius:2px;box-sizing:border-box;"></div>
<span class="t n" style="top:329.66px;font-size:9.2px;line-height:12px;color:#333;left:17px;transform:scaleX(0.913);transform-origin:0 0;">Wylicz godziny</span>
<span class="t" style="top:327.03px;font-size:9px;line-height:12px;color:#ff0a0a;font-weight:bold;left:94px;transform:scaleX(1.044);transform-origin:0 0;">Logo: E00001, Nowakowski Emil, Umowa: Fir2/1, FTE: 1/1, SCP: podstawowy, Czas Przesłania Ewidencji: brak, Czas Zamknięcia Listy: brak</span>
<div style="left:1px;top:343px;width:766px;height:4px;background:#c4c4c4;"></div>
<div style="left:1px;top:347px;width:766px;height:20px;background:#ebebeb;"></div>
<svg style="left:5px;top:351px;" width="12" height="13" viewBox="0 0 12 13"><path d="M0.5 0.5 V12.5 H11.5" fill="none" stroke="#2f6fbf" stroke-width="1"/><rect x="1" y="8" width="5" height="4" fill="#2f6fbf"/><circle cx="7" cy="4.5" r="3" fill="none" stroke="#2f6fbf" stroke-width="1.3"/><path d="M9 6.5 L11.5 9" stroke="#2f6fbf" stroke-width="1.5"/><rect x="7" y="10" width="4" height="2" fill="#aac"/></svg>
<span class="t n" style="top:350.83px;font-size:9px;line-height:12px;color:#333;left:21px;transform:scaleX(0.944);transform-origin:0 0;">Harmonogramowanie i kontrola</span>
<svg style="left:145px;top:356px;" width="6" height="4" viewBox="0 0 6 4"><path d="M0.5 0.5 L3.0 3.5 L5.5 0.5" fill="none" stroke="#333" stroke-width="1.1"/></svg>
<svg style="left:167px;top:351px;" width="5" height="7" viewBox="0 0 5 7"><path d="M4.5 0.5 L0.8 3.5 L4.5 6.5 Z" fill="#4f6f96"/></svg>
<div style="left:177px;top:348px;width:101px;height:19px;background:#fff;border-top:2px solid #2b93d6;box-sizing:border-box;"></div>
<span class="t" style="top:351.96px;font-size:8.6px;line-height:12px;color:#1e86cc;font-weight:bold;left:185.2px;transform:scaleX(0.909);transform-origin:0 0;">Godziny do rozliczenia</span>
<div style="left:278px;top:350px;width:117px;height:17px;background:#fff;border:1px solid #dddddd;border-left:none;border-bottom:none;box-sizing:border-box;"></div>
<span class="t n" style="top:351.89px;font-size:8.8px;line-height:12px;color:#555;left:286px;width:114.9px;overflow:hidden;transform:scaleX(0.940);transform-origin:0 0;">SCP godziny do rozliczenia</span>
<div style="left:395px;top:350px;width:55px;height:17px;background:#fff;border:1px solid #dddddd;border-left:none;border-bottom:none;box-sizing:border-box;"></div>
<span class="t n" style="top:351.89px;font-size:8.8px;line-height:12px;color:#555;left:403px;width:50.8px;overflow:hidden;transform:scaleX(0.906);transform-origin:0 0;">Błędy RCP</span>
<div style="left:450px;top:350px;width:90px;height:17px;background:#fff;border:1px solid #dddddd;border-left:none;border-bottom:none;box-sizing:border-box;"></div>
<span class="t n" style="top:351.89px;font-size:8.8px;line-height:12px;color:#555;left:458px;width:83.8px;overflow:hidden;transform:scaleX(0.966);transform-origin:0 0;">Historia autoryzacji</span>
<div style="left:540px;top:350px;width:129px;height:17px;background:#fff;border:1px solid #dddddd;border-left:none;border-bottom:none;box-sizing:border-box;"></div>
<span class="t n" style="top:351.89px;font-size:8.8px;line-height:12px;color:#555;left:548px;width:125.1px;overflow:hidden;transform:scaleX(0.959);transform-origin:0 0;">Rozliczenie - historia statusów</span>
<div style="left:669px;top:350px;width:72px;height:17px;background:#fff;border:1px solid #dddddd;border-left:none;border-bottom:none;box-sizing:border-box;"></div>
<span class="t n" style="top:351.89px;font-size:8.8px;line-height:12px;color:#555;left:677px;width:70.0px;overflow:hidden;transform:scaleX(0.900);transform-origin:0 0;">RCP załączniki</span>
<div style="left:741px;top:350px;width:11px;height:17px;background:#fff;border:1px solid #dddddd;border-left:none;border-bottom:none;box-sizing:border-box;"></div>
<span class="t n" style="top:351.89px;font-size:8.8px;line-height:12px;color:#555;left:749px;width:2.2px;overflow:hidden;transform:scaleX(0.900);transform-origin:0 0;">RCP</span>
<div style="left:752px;top:348px;width:15px;height:19px;background:#e4e4e4;"></div>
<svg style="left:757px;top:351px;" width="5" height="7" viewBox="0 0 5 7"><path d="M0.5 0 L4.5 3.5 L0.5 7 Z" fill="#2a7fd0"/></svg>
<div style="left:1px;top:367px;width:766px;height:23px;background:#fff;"></div>
<svg style="left:5px;top:372px;" width="13" height="13" viewBox="0 0 13 13"><path d="M6 11.5 H0.5 V0.5 H9.5 V6" fill="none" stroke="#777"/><circle cx="9" cy="9.5" r="3.5" fill="#3aa56a"/><path d="M9 7.5 V11.5 M7 9.5 H11" stroke="#fff" stroke-width="1.1"/></svg>
<span class="t n" style="top:372.29px;font-size:8.8px;line-height:12px;color:#333;left:19px;transform:scaleX(0.920);transform-origin:0 0;">Nowy</span>
<svg style="left:47px;top:377px;" width="6" height="4" viewBox="0 0 6 4"><path d="M0.5 0.5 L3.0 3.5 L5.5 0.5" fill="none" stroke="#2a64a8" stroke-width="1"/></svg>
<svg style="left:61px;top:372px;" width="12" height="13" viewBox="0 0 12 13"><path d="M6 11.5 H0.5 V0.5 H9.5 V4" fill="none" stroke="#c8c8c8"/><path d="M4 10 L10.5 3.5" stroke="#a8c4e0" stroke-width="1.8"/></svg>
<span class="t n" style="top:372.29px;font-size:8.8px;line-height:12px;color:#b5b5b5;left:75px;transform:scaleX(0.920);transform-origin:0 0;">Edycja</span>
<svg style="left:109px;top:372px;" width="12" height="13" viewBox="0 0 12 13"><path d="M6 11.5 H0.5 V0.5 H9.5 V5" fill="none" stroke="#c8c8c8"/><circle cx="8.5" cy="9.5" r="3.2" fill="#f0a9a3"/><path d="M7.2 8.2 L9.8 10.8 M9.8 8.2 L7.2 10.8" stroke="#fff" stroke-width="1"/></svg>
<svg style="left:128px;top:372px;" width="14" height="14" viewBox="0 0 14 14"><rect x="3" y="0.5" width="8" height="5" rx="1" fill="#fff" stroke="#8a9099" stroke-width="0.8"/><rect x="0.5" y="4" width="13" height="6" rx="2" fill="#6f757c"/><rect x="2.5" y="3.2" width="9" height="2.6" fill="#2f6cc0"/><rect x="3" y="8.3" width="8" height="4.8" fill="#cfd8e3" stroke="#8a9099" stroke-width="0.6"/></svg>
<svg style="left:148px;top:377px;" width="6" height="4" viewBox="0 0 6 4"><path d="M0.5 0.5 L3.0 3.5 L5.5 0.5" fill="none" stroke="#2a64a8" stroke-width="1"/></svg>
<svg style="left:163px;top:372px;" width="12" height="13" viewBox="0 0 12 13"><path d="M6 11.5 H0.5 V0.5 H9.5 V5" fill="none" stroke="#555"/><path d="M10.5 6.5 A3 3 0 0 0 5.5 7.5 M5.5 11 A3 3 0 0 0 10.5 10" fill="none" stroke="#2ea05a" stroke-width="1.2"/></svg>
<span class="t n" style="top:372.29px;font-size:8.8px;line-height:12px;color:#333;left:177px;transform:scaleX(0.920);transform-origin:0 0;">Statusy</span>
<svg style="left:208px;top:377px;" width="6" height="4" viewBox="0 0 6 4"><path d="M0.5 0.5 L3.0 3.5 L5.5 0.5" fill="none" stroke="#2a64a8" stroke-width="1"/></svg>
<svg style="left:224px;top:372px;" width="14" height="14" viewBox="0 0 14 14"><path d="M6 11.5 H0.5 V0.5 H9.5 V6" fill="none" stroke="#6b6b6b" stroke-width="1"/><circle cx="9.3" cy="9.3" r="2.1" fill="none" stroke="#555" stroke-width="1.7"/><path d="M9.3 5.6 V13 M5.6 9.3 H13 M6.7 6.7 L11.9 11.9 M11.9 6.7 L6.7 11.9" stroke="#555" stroke-width="1.1"/><circle cx="9.3" cy="9.3" r="1" fill="#fff"/></svg>
<span class="t n" style="top:372.29px;font-size:8.8px;line-height:12px;color:#333;left:238px;transform:scaleX(0.920);transform-origin:0 0;">Procedury</span>
<svg style="left:282px;top:377px;" width="6" height="4" viewBox="0 0 6 4"><path d="M0.5 0.5 L3.0 3.5 L5.5 0.5" fill="none" stroke="#2a64a8" stroke-width="1"/></svg>
<svg style="left:292px;top:371px;" width="14" height="14" viewBox="0 0 14 14"><path d="M2 9 L8 3 A2.5 2.5 0 0 1 11.5 6.5 L5 13 A1.5 1.5 0 0 1 3 11 L9 5" fill="none" stroke="#3a7fc8" stroke-width="1.1"/><circle cx="10" cy="10" r="3.3" fill="#2ea05a"/><path d="M10 8 V12 M8 10 H12" stroke="#fff" stroke-width="1.1"/></svg>
<span class="t n" style="top:372.29px;font-size:8.8px;line-height:12px;color:#333;left:308px;width:66.3px;overflow:hidden;transform:scaleX(0.920);transform-origin:0 0;">Dodaj załącznik</span>
<svg style="left:631px;top:372px;" width="13" height="13" viewBox="0 0 13 13"><rect x="0.5" y="4" width="3" height="8.5" fill="#8bc34a"/><rect x="4" y="1" width="3" height="11.5" fill="#f5b400"/><rect x="7.5" y="3" width="4" height="9.5" fill="#8e5bd0"/><path d="M0 12.5 H13" stroke="#777"/></svg>
<svg style="left:649px;top:377px;" width="6" height="4" viewBox="0 0 6 4"><path d="M0.5 0.5 L3.0 3.5 L5.5 0.5" fill="none" stroke="#2a64a8" stroke-width="1"/></svg>
<svg style="left:661px;top:372px;" width="14" height="14" viewBox="0 0 14 14"><rect x="0.5" y="0.5" width="11" height="11" fill="#fff" stroke="#555"/><rect x="0.5" y="0.5" width="11" height="2" fill="#2f6fbf"/><circle cx="9" cy="9" r="2.8" fill="#fff" stroke="#2f6fbf" stroke-width="1.3"/><path d="M7 11 L5 13.5" stroke="#2f6fbf" stroke-width="1.5"/></svg>
<span class="t n" style="top:372.29px;font-size:8.8px;line-height:12px;color:#333;left:677px;transform:scaleX(0.920);transform-origin:0 0;">Podgląd</span>
<svg style="left:718px;top:371px;" width="14" height="14" viewBox="0 0 14 14"><path d="M12 6.2 A5.2 5.2 0 0 0 2.6 4.6 M2 8.4 A5.2 5.2 0 0 0 11.6 9.6" fill="none" stroke="#2f9f63" stroke-width="1.8"/><path d="M0.6 2.6 L5.4 3.2 L1.8 7 Z M13.4 11.8 L8.6 11 L12.4 7.4 Z" fill="#2f9f63"/></svg>
<svg style="left:741px;top:371px;" width="12" height="12" viewBox="0 0 12 12"><circle cx="6" cy="6" r="6" fill="#2367b9"/><path d="M4 4.6 C4 2.3 8.2 2.3 8.2 4.6 C8.2 6.2 6.1 6.2 6.1 7.8" fill="none" stroke="#fff" stroke-width="1.6"/><circle cx="6.1" cy="9.8" r="0.9" fill="#fff"/></svg>
<svg style="left:758px;top:377px;" width="6" height="4" viewBox="0 0 6 4"><path d="M0.5 0.5 L3.0 3.5 L5.5 0.5" fill="none" stroke="#2a64a8" stroke-width="1"/></svg>
<div style="left:733px;top:383px;width:20px;height:7px;background:#f4f4f4;border:1px solid #d0d0d0;border-bottom:none;border-radius:3px 3px 0 0;box-sizing:border-box;"></div>
<svg style="left:739px;top:384px;" width="8" height="5" viewBox="0 0 8 5"><path d="M0.5 1 L4 4 L7.5 1" fill="none" stroke="#1f6fc0" stroke-width="1.2"/></svg>
<div style="left:1px;top:390px;width:766px;height:37px;background:#f1f1f1;"></div>
<div style="left:1px;top:426px;width:766px;height:1px;background:#cfcfcf;"></div>
<div style="left:37px;top:390px;width:1px;height:37px;background:#dcdcdc;"></div>
<div style="left:87px;top:390px;width:1px;height:37px;background:#dcdcdc;"></div>
<div style="left:113px;top:390px;width:1px;height:37px;background:#dcdcdc;"></div>
<div style="left:148px;top:390px;width:1px;height:37px;background:#dcdcdc;"></div>
<div style="left:254px;top:390px;width:1px;height:37px;background:#dcdcdc;"></div>
<div style="left:693px;top:390px;width:1px;height:37px;background:#dcdcdc;"></div>
<div style="left:756px;top:390px;width:1px;height:37px;background:#dcdcdc;"></div>
<div style="left:620px;top:403px;width:1px;height:24px;background:#dcdcdc;"></div>
<div style="left:662px;top:403px;width:1px;height:24px;background:#dcdcdc;"></div>
<span class="t" style="top:390.46px;font-size:8.6px;line-height:12px;color:#1e86cc;font-weight:bold;left:41px;transform:scaleX(0.920);transform-origin:0 0;">Data</span>
<div style="left:75px;top:390px;width:13px;height:12px;background:transparent;border-left:1px solid #dedede;border-bottom:1px solid #dedede;box-sizing:border-box;"></div>
<svg style="left:78px;top:391px;" width="9" height="9" viewBox="0 0 9 9"><path d="M4 8 V3" stroke="#62b98b" stroke-width="1.5"/><path d="M1.3 4.3 L4 1.2 L6.7 4.3 Z" fill="#62b98b"/></svg>
<span class="t" style="top:390.46px;font-size:8.6px;line-height:12px;color:#333;font-weight:bold;left:91px;transform:scaleX(0.920);transform-origin:0 0;">Rok</span>
<span class="t" style="top:390.46px;font-size:8.6px;line-height:12px;color:#333;font-weight:bold;left:117px;width:33.7px;overflow:hidden;transform:scaleX(0.920);transform-origin:0 0;">Miesiąc</span>
<span class="t" style="top:390.46px;font-size:8.6px;line-height:12px;color:#333;font-weight:bold;left:150px;transform:scaleX(0.920);transform-origin:0 0;">Rozliczenie</span>
<span class="t" style="top:390.46px;font-size:8.6px;line-height:12px;color:#333;font-weight:bold;left:259px;transform:scaleX(0.920);transform-origin:0 0;">Godziny do rozliczenia</span>
<span class="t" style="top:390.46px;font-size:8.6px;line-height:12px;color:#333;font-weight:bold;left:698px;transform:scaleX(0.920);transform-origin:0 0;">Status</span>
<div style="left:149px;top:402px;width:105px;height:1px;background:#dcdcdc;"></div>
<div style="left:255px;top:402px;width:438px;height:1px;background:#dcdcdc;"></div>
<span class="t" style="top:402.46px;font-size:8.6px;line-height:12px;color:#333;font-weight:bold;left:150px;transform:scaleX(0.920);transform-origin:0 0;">Numer</span>
<span class="t" style="top:414.46px;font-size:8.6px;line-height:12px;color:#333;font-weight:bold;left:150px;transform:scaleX(0.920);transform-origin:0 0;">listy</span>
<div style="left:185px;top:403px;width:1px;height:24px;background:#dcdcdc;"></div>
<span class="t" style="top:402.46px;font-size:8.6px;line-height:12px;color:#333;font-weight:bold;left:189px;transform:scaleX(0.920);transform-origin:0 0;">Wypłata</span>
<div style="left:186px;top:414px;width:68px;height:1px;background:#dcdcdc;"></div>
<span class="t" style="top:414.46px;font-size:8.6px;line-height:12px;color:#333;font-weight:bold;left:189px;transform:scaleX(0.920);transform-origin:0 0;">Rok</span>
<div style="left:218px;top:415px;width:1px;height:12px;background:#dcdcdc;"></div>
<span class="t" style="top:414.46px;font-size:8.6px;line-height:12px;color:#333;font-weight:bold;left:221px;transform:scaleX(0.920);transform-origin:0 0;">Miesiąc</span>
<span class="t" style="top:402.46px;font-size:8.6px;line-height:12px;color:#333;font-weight:bold;left:259px;transform:scaleX(0.920);transform-origin:0 0;">Od</span>
<div style="left:284px;top:403px;width:1px;height:24px;background:#dcdcdc;"></div>
<span class="t" style="top:402.46px;font-size:8.6px;line-height:12px;color:#333;font-weight:bold;left:288px;transform:scaleX(0.920);transform-origin:0 0;">Do</span>
<div style="left:315px;top:403px;width:1px;height:24px;background:#dcdcdc;"></div>
<span class="t" style="top:402.46px;font-size:8.6px;line-height:12px;color:#333;font-weight:bold;left:319px;transform:scaleX(0.920);transform-origin:0 0;">Dodatek</span>
<div style="left:316px;top:414px;width:100px;height:1px;background:#dcdcdc;"></div>
<span class="t" style="top:414.46px;font-size:8.6px;line-height:12px;color:#333;font-weight:bold;left:319px;transform:scaleX(0.920);transform-origin:0 0;">Czas</span>
<div style="left:343px;top:415px;width:1px;height:12px;background:#dcdcdc;"></div>
<span class="t" style="top:414.46px;font-size:8.6px;line-height:12px;color:#333;font-weight:bold;left:348px;transform:scaleX(0.920);transform-origin:0 0;">Czas kor.</span>
<div style="left:385px;top:415px;width:1px;height:12px;background:#dcdcdc;"></div>
<span class="t" style="top:414.46px;font-size:8.6px;line-height:12px;color:#333;font-weight:bold;left:389px;transform:scaleX(0.920);transform-origin:0 0;">Saldo</span>
<div style="left:416px;top:403px;width:1px;height:24px;background:#dcdcdc;"></div>
<span class="t" style="top:402.46px;font-size:8.6px;line-height:12px;color:#333;font-weight:bold;left:421px;transform:scaleX(0.920);transform-origin:0 0;">Wynagrodzenie</span>
<div style="left:417px;top:414px;width:95px;height:1px;background:#dcdcdc;"></div>
<span class="t" style="top:414.46px;font-size:8.6px;line-height:12px;color:#333;font-weight:bold;left:421px;transform:scaleX(0.920);transform-origin:0 0;">Czas</span>
<div style="left:445px;top:415px;width:1px;height:12px;background:#dcdcdc;"></div>
<span class="t" style="top:414.46px;font-size:8.6px;line-height:12px;color:#333;font-weight:bold;left:448px;width:35.9px;overflow:hidden;transform:scaleX(0.920);transform-origin:0 0;">Czas kor.</span>
<div style="left:481px;top:415px;width:1px;height:12px;background:#dcdcdc;"></div>
<span class="t" style="top:414.46px;font-size:8.6px;line-height:12px;color:#333;font-weight:bold;left:485px;transform:scaleX(0.920);transform-origin:0 0;">Saldo</span>
<div style="left:512px;top:403px;width:1px;height:24px;background:#dcdcdc;"></div>
<span class="t" style="top:402.46px;font-size:8.6px;line-height:12px;color:#333;font-weight:bold;left:516px;transform:scaleX(0.920);transform-origin:0 0;">Rodzaj godzin</span>
<div style="left:513px;top:414px;width:107px;height:1px;background:#dcdcdc;"></div>
<span class="t" style="top:414.46px;font-size:8.6px;line-height:12px;color:#333;font-weight:bold;left:516px;transform:scaleX(0.920);transform-origin:0 0;">Kod</span>
<div style="left:596px;top:415px;width:1px;height:12px;background:#dcdcdc;"></div>
<span class="t" style="top:414.46px;font-size:8.6px;line-height:12px;color:#333;font-weight:bold;left:600px;transform:scaleX(0.920);transform-origin:0 0;">Auto</span>
<span class="t" style="top:402.46px;font-size:8.6px;line-height:12px;color:#333;font-weight:bold;left:624px;width:41.3px;overflow:hidden;transform:scaleX(0.920);transform-origin:0 0;">Załącznik</span>
<span class="t" style="top:402.46px;font-size:8.6px;line-height:12px;color:#333;font-weight:bold;left:667px;transform:scaleX(0.920);transform-origin:0 0;">Poza</span>
<span class="t" style="top:414.46px;font-size:8.6px;line-height:12px;color:#333;font-weight:bold;left:670px;transform:scaleX(0.920);transform-origin:0 0;">rozl.</span>
<div style="left:6px;top:416px;width:7px;height:7px;background:#fff;border:1px solid #c8c8c8;"></div>
<svg style="left:759px;top:402px;" width="6" height="9" viewBox="0 0 6 9"><path d="M4.8 0.8 L1.2 4.5 L4.8 8.2" fill="none" stroke="#2a7fd0" stroke-width="1.3"/></svg>
<div style="left:1px;top:427.0px;width:766px;height:16.15px;background:#fff;"></div>
<div style="left:1px;top:442.15px;width:766px;height:1px;background:#e1ecf5;"></div>
<div style="left:21px;top:427.0px;width:1px;height:16.15px;background:#d5e6f3;"></div>
<div style="left:37px;top:427.0px;width:1px;height:16.15px;background:#d5e6f3;"></div>
<div style="left:7px;top:431.0px;width:7px;height:7px;background:#fff;border:1px solid #d0d0d0;"></div>
<span class="t n" style="top:429.59px;font-size:8.8px;line-height:12px;color:#333;left:41.3px;transform:scaleX(0.963);transform-origin:0 0;">02.02.2019</span>
<span class="t n" style="top:429.59px;font-size:8.8px;line-height:12px;color:#333;left:93px;transform:scaleX(0.955);transform-origin:0 0;">2019</span>
<span class="t n" style="top:429.59px;font-size:8.8px;line-height:12px;color:#333;right:623px;transform:scaleX(0.920);transform-origin:100% 0;">2</span>
<span class="t n" style="top:429.59px;font-size:8.8px;line-height:12px;color:#333;left:196px;transform:scaleX(0.920);transform-origin:0 0;">2019</span>
<span class="t n" style="top:429.59px;font-size:8.8px;line-height:12px;color:#333;right:516px;transform:scaleX(0.920);transform-origin:100% 0;">2</span>
<span class="t n" style="top:429.59px;font-size:8.8px;line-height:12px;color:#333;left:259px;transform:scaleX(0.936);transform-origin:0 0;">08:00</span>
<span class="t n" style="top:429.59px;font-size:8.8px;line-height:12px;color:#333;left:288px;transform:scaleX(0.936);transform-origin:0 0;">16:00</span>
<span class="t n" style="top:429.59px;font-size:8.8px;line-height:12px;color:#333;left:319px;transform:scaleX(0.936);transform-origin:0 0;">08:00</span>
<span class="t n" style="top:429.59px;font-size:8.8px;line-height:12px;color:#333;left:348px;transform:scaleX(0.936);transform-origin:0 0;">00:00</span>
<span class="t n" style="top:429.59px;font-size:8.8px;line-height:12px;color:#333;left:389px;transform:scaleX(0.936);transform-origin:0 0;">08:00</span>
<span class="t n" style="top:429.59px;font-size:8.8px;line-height:12px;color:#333;left:421px;transform:scaleX(0.936);transform-origin:0 0;">00:00</span>
<span class="t n" style="top:429.59px;font-size:8.8px;line-height:12px;color:#333;left:448px;transform:scaleX(0.936);transform-origin:0 0;">00:00</span>
<span class="t n" style="top:429.59px;font-size:8.8px;line-height:12px;color:#333;left:485px;transform:scaleX(0.936);transform-origin:0 0;">00:00</span>
<span class="t n" style="top:429.59px;font-size:8.8px;line-height:12px;color:#333;left:516px;width:82.2px;overflow:hidden;transform:scaleX(0.961);transform-origin:0 0;">PracaMiedzyDobami</span>
<div style="left:605px;top:431.0px;width:8px;height:8px;background:#fff;border:1px solid #d4d4d4;"></div>
<svg style="left:605px;top:429.0px;" width="12" height="11" viewBox="0 0 12 11"><path d="M2 6 L4.3 8.4 L10.2 2" fill="none" stroke="#1c9de6" stroke-width="2.3"/></svg>
<div style="left:638px;top:431.0px;width:8px;height:8px;background:#fff;border:1px solid #d0d0d0;"></div>
<div style="left:674px;top:431.0px;width:8px;height:8px;background:#fff;border:1px solid #d0d0d0;"></div>
<span class="t n" style="top:429.59px;font-size:8.8px;line-height:12px;color:#333;left:698px;transform:scaleX(0.969);transform-origin:0 0;">Zatwierdzony</span>
<div style="left:1px;top:443.15px;width:766px;height:16.15px;background:#eaf1f6;"></div>
<div style="left:1px;top:458.29999999999995px;width:766px;height:1px;background:#e1ecf5;"></div>
<div style="left:21px;top:443.15px;width:1px;height:16.15px;background:#d5e6f3;"></div>
<div style="left:37px;top:443.15px;width:1px;height:16.15px;background:#d5e6f3;"></div>
<div style="left:7px;top:447.15px;width:7px;height:7px;background:#fff;border:1px solid #d0d0d0;"></div>
<span class="t n" style="top:445.74px;font-size:8.8px;line-height:12px;color:#333;left:41.3px;transform:scaleX(0.963);transform-origin:0 0;">09.02.2019</span>
<span class="t n" style="top:445.74px;font-size:8.8px;line-height:12px;color:#333;left:93px;transform:scaleX(0.955);transform-origin:0 0;">2019</span>
<span class="t n" style="top:445.74px;font-size:8.8px;line-height:12px;color:#333;right:623px;transform:scaleX(0.920);transform-origin:100% 0;">2</span>
<span class="t n" style="top:445.74px;font-size:8.8px;line-height:12px;color:#333;left:259px;transform:scaleX(0.936);transform-origin:0 0;">09:00</span>
<span class="t n" style="top:445.74px;font-size:8.8px;line-height:12px;color:#333;left:288px;transform:scaleX(0.936);transform-origin:0 0;">12:00</span>
<span class="t n" style="top:445.74px;font-size:8.8px;line-height:12px;color:#333;left:319px;transform:scaleX(0.936);transform-origin:0 0;">03:00</span>
<span class="t n" style="top:445.74px;font-size:8.8px;line-height:12px;color:#333;left:348px;transform:scaleX(0.936);transform-origin:0 0;">00:00</span>
<span class="t n" style="top:445.74px;font-size:8.8px;line-height:12px;color:#333;left:389px;transform:scaleX(0.936);transform-origin:0 0;">03:00</span>
<span class="t n" style="top:445.74px;font-size:8.8px;line-height:12px;color:#333;left:421px;transform:scaleX(0.936);transform-origin:0 0;">00:00</span>
<span class="t n" style="top:445.74px;font-size:8.8px;line-height:12px;color:#333;left:448px;transform:scaleX(0.936);transform-origin:0 0;">00:00</span>
<span class="t n" style="top:445.74px;font-size:8.8px;line-height:12px;color:#333;left:485px;transform:scaleX(0.936);transform-origin:0 0;">00:00</span>
<span class="t n" style="top:445.74px;font-size:8.8px;line-height:12px;color:#333;left:516px;width:82.2px;overflow:hidden;transform:scaleX(0.961);transform-origin:0 0;">PracaMiedzyDobami</span>
<div style="left:605px;top:447.15px;width:8px;height:8px;background:#fff;border:1px solid #d4d4d4;"></div>
<svg style="left:605px;top:445.15px;" width="12" height="11" viewBox="0 0 12 11"><path d="M2 6 L4.3 8.4 L10.2 2" fill="none" stroke="#1c9de6" stroke-width="2.3"/></svg>
<div style="left:638px;top:447.15px;width:8px;height:8px;background:#fff;border:1px solid #d0d0d0;"></div>
<div style="left:674px;top:447.15px;width:8px;height:8px;background:#fff;border:1px solid #d0d0d0;"></div>
<span class="t n" style="top:445.74px;font-size:8.8px;line-height:12px;color:#333;left:698px;transform:scaleX(0.930);transform-origin:0 0;">Nowy</span>
<div style="left:1px;top:459.3px;width:766px;height:16.15px;background:#fff;"></div>
<div style="left:1px;top:474.45px;width:766px;height:1px;background:#e1ecf5;"></div>
<div style="left:21px;top:459.3px;width:1px;height:16.15px;background:#d5e6f3;"></div>
<div style="left:37px;top:459.3px;width:1px;height:16.15px;background:#d5e6f3;"></div>
<div style="left:7px;top:463.3px;width:7px;height:7px;background:#fff;border:1px solid #d0d0d0;"></div>
<span class="t n" style="top:461.89px;font-size:8.8px;line-height:12px;color:#333;left:41.3px;transform:scaleX(0.963);transform-origin:0 0;">10.02.2019</span>
<span class="t n" style="top:461.89px;font-size:8.8px;line-height:12px;color:#333;left:93px;transform:scaleX(0.955);transform-origin:0 0;">2019</span>
<span class="t n" style="top:461.89px;font-size:8.8px;line-height:12px;color:#333;right:623px;transform:scaleX(0.920);transform-origin:100% 0;">2</span>
<span class="t n" style="top:461.89px;font-size:8.8px;line-height:12px;color:#333;left:259px;transform:scaleX(0.936);transform-origin:0 0;">08:00</span>
<span class="t n" style="top:461.89px;font-size:8.8px;line-height:12px;color:#333;left:288px;transform:scaleX(0.936);transform-origin:0 0;">16:00</span>
<span class="t n" style="top:461.89px;font-size:8.8px;line-height:12px;color:#333;left:319px;transform:scaleX(0.936);transform-origin:0 0;">08:00</span>
<span class="t n" style="top:461.89px;font-size:8.8px;line-height:12px;color:#333;left:348px;transform:scaleX(0.936);transform-origin:0 0;">00:00</span>
<span class="t n" style="top:461.89px;font-size:8.8px;line-height:12px;color:#333;left:389px;transform:scaleX(0.936);transform-origin:0 0;">08:00</span>
<span class="t n" style="top:461.89px;font-size:8.8px;line-height:12px;color:#333;left:421px;transform:scaleX(0.936);transform-origin:0 0;">00:00</span>
<span class="t n" style="top:461.89px;font-size:8.8px;line-height:12px;color:#333;left:448px;transform:scaleX(0.936);transform-origin:0 0;">00:00</span>
<span class="t n" style="top:461.89px;font-size:8.8px;line-height:12px;color:#333;left:485px;transform:scaleX(0.936);transform-origin:0 0;">00:00</span>
<span class="t n" style="top:461.89px;font-size:8.8px;line-height:12px;color:#333;left:516px;width:82.2px;overflow:hidden;transform:scaleX(0.961);transform-origin:0 0;">PracaMiedzyDobami</span>
<div style="left:605px;top:463.3px;width:8px;height:8px;background:#fff;border:1px solid #d4d4d4;"></div>
<svg style="left:605px;top:461.3px;" width="12" height="11" viewBox="0 0 12 11"><path d="M2 6 L4.3 8.4 L10.2 2" fill="none" stroke="#1c9de6" stroke-width="2.3"/></svg>
<div style="left:638px;top:463.3px;width:8px;height:8px;background:#fff;border:1px solid #d0d0d0;"></div>
<div style="left:674px;top:463.3px;width:8px;height:8px;background:#fff;border:1px solid #d0d0d0;"></div>
<span class="t n" style="top:461.89px;font-size:8.8px;line-height:12px;color:#333;left:698px;transform:scaleX(0.930);transform-origin:0 0;">Nowy</span>
<div style="left:1px;top:475.45px;width:766px;height:16.15px;background:#eaf1f6;"></div>
<div style="left:1px;top:490.59999999999997px;width:766px;height:1px;background:#e1ecf5;"></div>
<div style="left:21px;top:475.45px;width:1px;height:16.15px;background:#d5e6f3;"></div>
<div style="left:37px;top:475.45px;width:1px;height:16.15px;background:#d5e6f3;"></div>
<div style="left:7px;top:479.45px;width:7px;height:7px;background:#fff;border:1px solid #d0d0d0;"></div>
<span class="t n" style="top:478.04px;font-size:8.8px;line-height:12px;color:#333;left:41.3px;transform:scaleX(0.963);transform-origin:0 0;">10.02.2019</span>
<span class="t n" style="top:478.04px;font-size:8.8px;line-height:12px;color:#333;left:93px;transform:scaleX(0.955);transform-origin:0 0;">2019</span>
<span class="t n" style="top:478.04px;font-size:8.8px;line-height:12px;color:#333;right:623px;transform:scaleX(0.920);transform-origin:100% 0;">2</span>
<span class="t n" style="top:478.04px;font-size:8.8px;line-height:12px;color:#333;left:259px;transform:scaleX(0.936);transform-origin:0 0;">16:00</span>
<span class="t n" style="top:478.04px;font-size:8.8px;line-height:12px;color:#333;left:288px;transform:scaleX(0.936);transform-origin:0 0;">17:00</span>
<span class="t n" style="top:478.04px;font-size:8.8px;line-height:12px;color:#333;left:319px;transform:scaleX(0.936);transform-origin:0 0;">01:00</span>
<span class="t n" style="top:478.04px;font-size:8.8px;line-height:12px;color:#333;left:348px;transform:scaleX(0.936);transform-origin:0 0;">00:00</span>
<span class="t n" style="top:478.04px;font-size:8.8px;line-height:12px;color:#333;left:389px;transform:scaleX(0.936);transform-origin:0 0;">01:00</span>
<span class="t n" style="top:478.04px;font-size:8.8px;line-height:12px;color:#333;left:421px;transform:scaleX(0.936);transform-origin:0 0;">01:00</span>
<span class="t n" style="top:478.04px;font-size:8.8px;line-height:12px;color:#333;left:448px;transform:scaleX(0.936);transform-origin:0 0;">00:00</span>
<span class="t n" style="top:478.04px;font-size:8.8px;line-height:12px;color:#333;left:485px;transform:scaleX(0.936);transform-origin:0 0;">01:00</span>
<span class="t n" style="top:478.04px;font-size:8.8px;line-height:12px;color:#333;left:516px;width:83.6px;overflow:hidden;transform:scaleX(0.945);transform-origin:0 0;">GNWyplataSw</span>
<div style="left:605px;top:479.45px;width:8px;height:8px;background:#fff;border:1px solid #d4d4d4;"></div>
<svg style="left:605px;top:477.45px;" width="12" height="11" viewBox="0 0 12 11"><path d="M2 6 L4.3 8.4 L10.2 2" fill="none" stroke="#1c9de6" stroke-width="2.3"/></svg>
<div style="left:638px;top:479.45px;width:8px;height:8px;background:#fff;border:1px solid #d0d0d0;"></div>
<div style="left:674px;top:479.45px;width:8px;height:8px;background:#fff;border:1px solid #d0d0d0;"></div>
<span class="t n" style="top:478.04px;font-size:8.8px;line-height:12px;color:#333;left:698px;transform:scaleX(0.930);transform-origin:0 0;">Nowy</span>
<div style="left:39px;top:428.5px;width:50px;height:15px;background:transparent;border:2px solid #0f78c0;box-sizing:border-box;"></div>
<div style="left:1px;top:525.6px;width:766px;height:1.8px;background:#e3e3e3;"></div>
<svg style="left:4px;top:528px;" width="5" height="7" viewBox="0 0 5 7"><path d="M4 0.8 L1.2 3.5 L4 6.2" fill="none" stroke="#999" stroke-width="1.2"/></svg>
<div style="left:10px;top:529px;width:574px;height:5px;background:#bdbdbd;"></div>
<svg style="left:760px;top:527px;" width="5" height="7" viewBox="0 0 5 7"><path d="M1 0.8 L3.8 3.5 L1 6.2" fill="none" stroke="#aaa" stroke-width="1.1"/></svg>
</body></html>
